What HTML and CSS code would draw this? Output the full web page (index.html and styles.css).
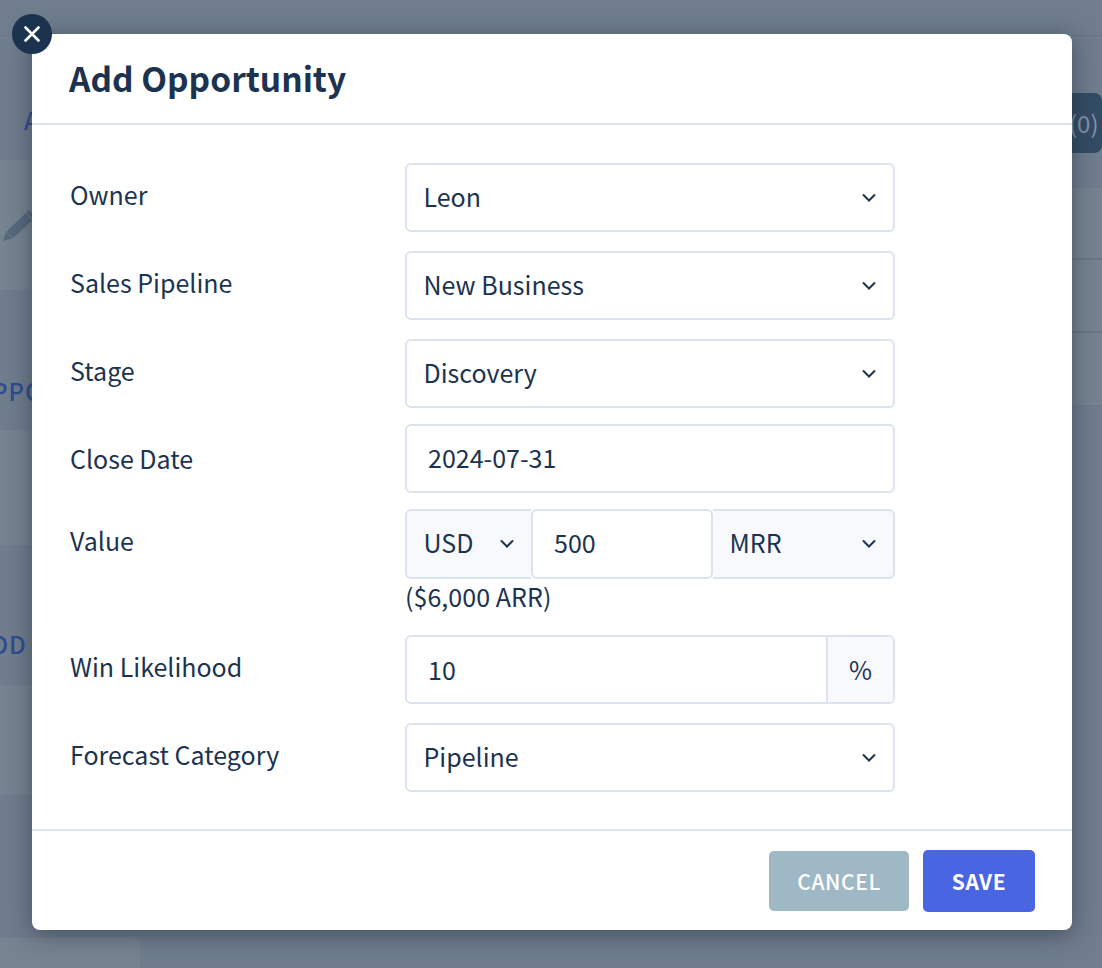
FILE: index.html
```html
<!DOCTYPE html>
<html lang="en">
<head>
<meta charset="utf-8">
<title>Add Opportunity</title>
<link rel="stylesheet" href="styles.css">
</head>
<body>
<div class="page">
  <div class="side-left">
    <div class="band band-top"></div>
    <div class="band band-a"><span class="bg-link bg-link-a">A</span></div>
    <div class="band band-pencil light">
      <svg class="pencil" width="40" height="40" viewBox="0 0 40 40"><path d="M3 38 L6 29 L29 7 L36 14 L13 35 Z" fill="#55697d"/><path d="M6.500 29.500 L12.500 35" stroke="#75838f" stroke-width="1" fill="none"/><path d="M26 10 L33 17" stroke="#75838f" stroke-width="1" fill="none"/></svg>
    </div>
    <div class="band band-ppo"><span class="bg-link bg-link-ppo">PPO</span></div>
    <div class="band band-e light"></div>
    <div class="band band-od"><span class="bg-link bg-link-od">OD</span></div>
    <div class="band band-g light"></div>
    <div class="band band-h"></div>
    <div class="band band-foot light"></div>
  </div>
  <div class="side-right">
    <div class="rband rband-top"></div>
    <div class="rband rband-pill"><div class="count-pill">(0)</div></div>
    <div class="rband rband-b"></div>
    <div class="rband rband-c"></div>
    <div class="rband rband-d"></div>
  </div>
</div>

<div class="modal">
  <button class="close" type="button" aria-label="Close">
    <svg width="16" height="16" viewBox="0 0 16 16"><path d="M1.500 1.500 L14.500 14.500 M14.500 1.500 L1.500 14.500" stroke="#fff" stroke-width="2.600" stroke-linecap="round" fill="none"/></svg>
  </button>
  <header class="modal-head"><h1 class="modal-title">Add Opportunity</h1></header>
  <form class="modal-body">
    <div class="row gap-l">
      <label class="label">Owner</label>
      <div class="control select">Leon<svg class="chev" viewBox="0 0 14 8"><path d="M1.500 1 L7 6.500 L12.500 1" /></svg></div>
    </div>
    <div class="row gap-l">
      <label class="label">Sales Pipeline</label>
      <div class="control select">New Business<svg class="chev" viewBox="0 0 14 8"><path d="M1.500 1 L7 6.500 L12.500 1" /></svg></div>
    </div>
    <div class="row gap-m">
      <label class="label">Stage</label>
      <div class="control select">Discovery<svg class="chev" viewBox="0 0 14 8"><path d="M1.500 1 L7 6.500 L12.500 1" /></svg></div>
    </div>
    <div class="row gap-m">
      <label class="label label-date">Close Date</label>
      <div class="control input">2024-07-31</div>
    </div>
    <div class="row">
      <label class="label">Value</label>
      <div class="value-col">
        <div class="value-group">
          <div class="control select tint currency">USD<svg class="chev" viewBox="0 0 14 8"><path d="M1.500 1 L7 6.500 L12.500 1" /></svg></div>
          <div class="control input amount">500</div>
          <div class="control select tint period">MRR<svg class="chev" viewBox="0 0 14 8"><path d="M1.500 1 L7 6.500 L12.500 1" /></svg></div>
        </div>
        <div class="arr">($6,000 ARR)</div>
      </div>
    </div>
    <div class="row gap-l">
      <label class="label">Win Likelihood</label>
      <div class="control input percent"><span class="percent-value">10</span><span class="percent-unit">%</span></div>
    </div>
    <div class="row">
      <label class="label">Forecast Category</label>
      <div class="control select">Pipeline<svg class="chev" viewBox="0 0 14 8"><path d="M1.500 1 L7 6.500 L12.500 1" /></svg></div>
    </div>
  </form>
  <footer class="modal-foot">
    <button class="btn btn-cancel" type="button">CANCEL</button>
    <button class="btn btn-save" type="button">SAVE</button>
  </footer>
</div>
</body>
</html>
```

FILE: styles.css
```css
* { box-sizing: border-box; }
html, body { margin: 0; padding: 0; height: 100%; overflow: hidden; }
body {
  background: #6f7d8d;
  font-family: "Noto Sans CJK SC", "Noto Sans", sans-serif;
  color: #1c3350;
  position: relative;
  width: 1102px;
  height: 968px;
}
.page { display: flex; justify-content: space-between; height: 968px; }
.side-left { width: 140px; display: flex; flex-direction: column; }
.side-right { width: 30px; display: flex; flex-direction: column; }
.band { position: relative; flex: none; overflow: hidden; }
.light { background: #768390; }
.band-top { height: 36px; border-bottom: 1px solid #687687; }
.band-a { height: 124px; }
.band-pencil { height: 130px; }
.band-ppo { height: 140px; }
.band-e { height: 115px; }
.band-od { height: 140px; }
.band-g { height: 110px; }
.band-h { height: 143px; }
.band-foot { height: 30px; border-top-right-radius: 6px; }
.pencil { position: absolute; left: 0; top: 43px; }
.bg-link { position: absolute; font-size: 24px; color: #2f4b90; font-weight: 500; letter-spacing: 1px; line-height: 30px; }
.bg-link-a { left: 24px; top: 69px; }
.bg-link-ppo { left: -8px; top: 86px; }
.bg-link-od { left: -10px; top: 84px; }
.rband { flex: none; border-bottom: 2px solid #687687; }
.rband-top { height: 36px; border-bottom-width: 1px; }
.rband-pill { height: 152px; border-bottom-width: 1px; border-color: #6d7b8b; padding-top: 57px; }
.rband-b { height: 72px; background: #768390; }
.rband-c { height: 73px; background: #768390; }
.rband-d { height: 73px; background: #768390; border-bottom-width: 1px; border-color: #6d7b8b; }
.count-pill {
  height: 60px;
  background: #334c65;
  color: #8693a3;
  border-radius: 0 8px 8px 0;
  font-size: 24px;
  line-height: 60px;
  margin-left: -5px;
  padding-left: 2px;
}

.modal {
  position: absolute;
  left: 32px;
  top: 34px;
  width: 1040px;
  height: 896px;
  background: #fff;
  border-radius: 8px;
  box-shadow: 0 4px 24px rgba(30, 40, 55, .55);
  display: flex;
  flex-direction: column;
}
.close {
  position: absolute;
  left: -20px;
  top: -20px;
  width: 39.500px;
  height: 39.500px;
  padding: 0;
  border: 0;
  border-radius: 50%;
  background: #1c3350;
  display: flex;
  align-items: center;
  justify-content: center;
}
.modal-head { height: 91px; border-bottom: 2px solid #dde3ee; padding: 0 37px; }
.modal-title { margin: 0; font-size: 33.500px; line-height: 88px; font-weight: 700; color: #1c3350; }
.modal-body { flex: 1; padding: 38px 38px 0 38px; }
.row { display: flex; margin-bottom: 0; }
.gap-l { margin-bottom: 19px; }
.gap-m { margin-bottom: 16px; }
.label { width: 335px; flex: none; font-size: 25px; line-height: 62px; }
.label-date { padding-top: 3px; }
.control {
  width: 490px;
  height: 69px;
  border: 2px solid #dde3ee;
  border-radius: 6px;
  font-size: 25px;
  line-height: 63px;
  background: #fff;
  position: relative;
  padding-left: 16.500px;
}
.input { padding-left: 21px; }
.chev {
  position: absolute;
  right: 17px;
  top: 29px;
  width: 14px;
  height: 8px;
  overflow: visible;
  fill: none;
  stroke: #1c3350;
  stroke-width: 2;
  stroke-linecap: round;
}
.value-col { width: 490px; }
.value-group { display: flex; height: 70px; }
.value-group .control { height: 70px; }
.tint { background: #f8f9fd; }
.currency { width: 126px; border-radius: 6px 0 0 6px; border-right: 0; }
.amount { width: 182px; padding-left: 21px; }
.period { width: 182px; border-radius: 0 6px 6px 0; border-left: 0; }
.arr { font-size: 25px; line-height: 34px; height: 56px; letter-spacing: .05px; }
.percent { display: flex; padding-left: 0; line-height: 65px; }
.percent-value { flex: 1; padding-left: 21px; }
.percent-unit { width: 67px; flex: none; background: #f8f9fd; border-left: 2px solid #dde3ee; border-radius: 0 4px 4px 0; text-align: center; }
.modal-foot {
  height: 101px;
  border-top: 2px solid #dde3ee;
  display: flex;
  justify-content: flex-end;
  align-items: center;
  padding-right: 37px;
  gap: 14px;
}
.btn {
  border: 0;
  border-radius: 5px;
  color: #fff;
  font-family: inherit;
  font-size: 21px;
  letter-spacing: .6px;
  padding: 0;
}
.btn-cancel { width: 140px; height: 60px; background: #9fb8c6; font-weight: 500; }
.btn-save { width: 112px; height: 62px; background: #4a65e2; font-weight: 600; }
```
